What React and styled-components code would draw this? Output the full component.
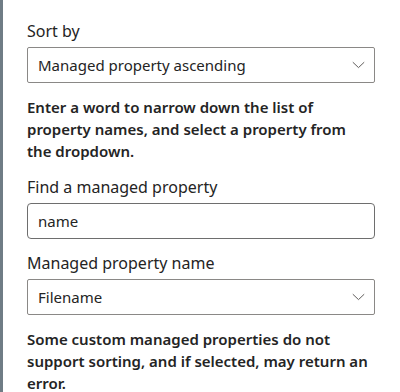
import React from 'react';
import styled, { createGlobalStyle } from 'styled-components';

const GlobalStyle = createGlobalStyle`
  html, body {
    margin: 0;
    padding: 0;
    background: #fff;
  }
  body {
    font-family: 'Noto Sans', 'Open Sans', sans-serif;
    color: #242424;
  }
`;

const Page = styled.div`
  display: flex;
  width: 400px;
  height: 392px;
  overflow: hidden;
`;

const SideRule = styled.div`
  width: 3px;
  flex: none;
  background: #6f7c85;
`;

const Panel = styled.div`
  flex: 1;
  padding: 20px 25px 0 24px;
  display: flex;
  flex-direction: column;
`;

const Label = styled.div`
  font-size: 16px;
  line-height: 22px;
  margin-bottom: 5px;
`;

const Field = styled.div`
  height: 36px;
  flex: none;
  box-sizing: border-box;
  border: 1px solid ${p => (p.$rounded ? '#6e6e6e' : '#8a8886')};
  border-radius: ${p => (p.$rounded ? '4px' : '2px')};
  display: flex;
  align-items: center;
  justify-content: space-between;
  padding: 0 9px 0 10px;
  font-size: 15px;
  margin-bottom: 13px;
`;

const Chevron = () => (
  <svg width="13" height="8" viewBox="0 0 13 8">
    <path d="M0.8 1.2 L6.5 6.6 L12.2 1.2" fill="none" stroke="#605e5c" strokeWidth="1" />
  </svg>
);

const Help = styled.p`
  margin: 0 0 ${p => p.$gap || 0}px;
  padding-right: 2px;
  font-size: 15px;
  line-height: 22px;
  font-weight: 600;
`;

export default function App() {
  return (
    <>
      <GlobalStyle />
      <Page>
        <SideRule />
        <Panel>
          <Label>Sort by</Label>
          <Field>
            <span>Managed property ascending</span>
            <Chevron />
          </Field>
          <Help $gap={14}>
            Enter a word to narrow down the list of property names, and select a property from
            the dropdown.
          </Help>
          <Label>Find a managed property</Label>
          <Field $rounded>
            <span>name</span>
          </Field>
          <Label>Managed property name</Label>
          <Field>
            <span>Filename</span>
            <Chevron />
          </Field>
          <Help>
            Some custom managed properties do not support sorting, and if selected, may return an
            error.
          </Help>
        </Panel>
      </Page>
    </>
  );
}
